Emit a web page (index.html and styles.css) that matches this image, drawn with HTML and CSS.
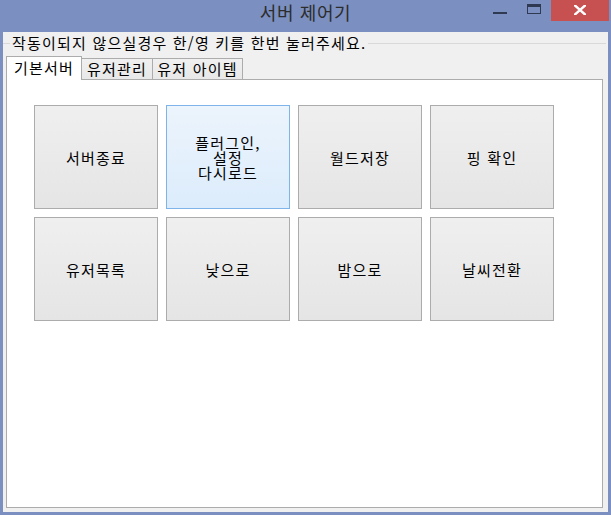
FILE: index.html
```html
<!DOCTYPE html>
<html lang="ko">
<head>
<meta charset="utf-8">
<title>서버 제어기</title>
<link rel="stylesheet" href="styles.css">
</head>
<body>
<div class="window">
  <div class="titlebar">
    <div class="title-spacer"></div>
    <div class="title">서버 제어기</div>
    <div class="controls">
      <div class="ctl ctl-min"><svg width="14" height="21" viewBox="0 0 14 21"><rect x="0" y="12" width="14" height="2" fill="#2f3a52"/></svg></div>
      <div class="ctl ctl-max"><svg width="14" height="21" viewBox="0 0 14 21"><rect x="0.5" y="4.5" width="13" height="9" fill="none" stroke="#2f3a52"/><rect x="0" y="4" width="14" height="3" fill="#2f3a52"/></svg></div>
      <div class="ctl ctl-close"><svg width="12" height="10" viewBox="0 0 12 10"><path d="M1 0.5 L11 9.5 M11 0.5 L1 9.5" stroke="#ffffff" stroke-width="2.4" stroke-linecap="square"/></svg></div>
    </div>
  </div>
  <div class="client">
    <div class="group-legend"><span class="legend-text">작동이되지 않으실경우 한/영 키를 한번 눌러주세요.</span></div>
    <div class="tabs">
      <div class="tab tab-active">기본서버</div>
      <div class="tab tab-user">유저관리</div>
      <div class="tab tab-item">유저 아이템</div>
    </div>
    <div class="panel">
      <div class="button-grid">
        <div class="btn">서버종료</div>
        <div class="btn btn-hover">플러그인,<br>설정<br>다시로드</div>
        <div class="btn">월드저장</div>
        <div class="btn">핑 확인</div>
        <div class="btn">유저목록</div>
        <div class="btn">낮으로</div>
        <div class="btn">밤으로</div>
        <div class="btn">날씨전환</div>
      </div>
    </div>
  </div>
</div>
</body>
</html>
```
FILE: styles.css
```css
* { box-sizing: border-box; }
html, body {
  margin: 0;
  padding: 0;
  width: 611px;
  height: 515px;
  overflow: hidden;
}
body {
  font-family: "Noto Sans CJK KR", "Noto Sans", sans-serif;
  font-size: 15px;
  letter-spacing: 1.2px;
  color: #000;
}
.window {
  width: 611px;
  height: 515px;
  background: #7b8fc0;
  display: flex;
  flex-direction: column;
}
.titlebar {
  height: 32px;
  flex: 0 0 32px;
  display: grid;
  grid-template-columns: 1fr auto 1fr;
}
.title {
  font-size: 18px;
  letter-spacing: 0.6px;
  line-height: 25px;
  color: #2c2c2c;
}
.controls {
  display: flex;
  justify-content: flex-end;
  align-items: flex-start;
  padding-right: 2px;
}
.ctl {
  height: 21px;
  display: flex;
  align-items: center;
  justify-content: center;
}
.ctl-min, .ctl-max { width: 34px; }
.ctl-close {
  width: 58px;
  background: #c75050;
  padding-bottom: 2px;
}
.client {
  flex: 1;
  margin: 0 3px 3px 3px;
  background: #f0f0f0;
  display: flex;
  flex-direction: column;
}
.group-legend {
  height: 22px;
  display: flex;
  align-items: center;
  line-height: 22px;
}
.group-legend::before {
  content: "";
  width: 7px;
  height: 1px;
  background: #d9d9d9;
  margin-right: 2px;
}
.group-legend::after {
  content: "";
  flex: 1;
  height: 1px;
  background: #d9d9d9;
  margin-left: 2px;
  margin-right: 2px;
}
.legend-text { white-space: nowrap; }
.tabs {
  margin-top: 2px;
  height: 23px;
  padding-left: 3px;
  display: flex;
  align-items: flex-end;
}
.tab {
  height: 21px;
  padding: 2px 0 2px 0;
  line-height: 16px;
  text-align: center;
  border: 1px solid #acacac;
  border-bottom: none;
  background: linear-gradient(#f0f0f0, #e8e8e8);
  margin-left: -1px;
  white-space: nowrap;
}
.tab-user { width: 72px; }
.tab-item { width: 91px; }
.tab-active {
  width: 76px;
  height: 24px;
  margin-left: 0;
  margin-bottom: -1px;
  padding: 3px 0 4px 0;
  background: #fff;
  position: relative;
  z-index: 2;
}
.panel {
  flex: 1;
  margin: 0 5px 4px 3px;
  background: #fff;
  border: 1px solid #acacac;
  padding: 25px 0 0 27px;
  position: relative;
  z-index: 1;
}
.button-grid {
  display: grid;
  grid-template-columns: repeat(4, 124px);
  grid-auto-rows: 104px;
  gap: 8px;
}
.btn {
  border: 1px solid #acacac;
  background: linear-gradient(#efefef, #e5e5e5);
  display: flex;
  align-items: center;
  justify-content: center;
  text-align: center;
  line-height: 15px;
}
.btn-hover {
  border-color: #7eb4ea;
  background: linear-gradient(#ecf4fc, #dcecfc);
}
```
